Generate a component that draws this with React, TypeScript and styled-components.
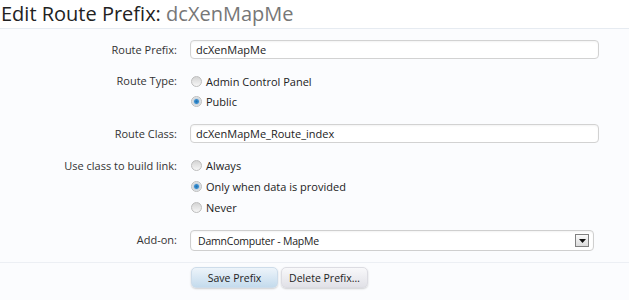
import React, { useState } from "react";
import styled, { createGlobalStyle } from "styled-components";

const GlobalStyle = createGlobalStyle`
  html, body {
    margin: 0;
    padding: 0;
    background: #fff;
  }
  body {
    font-family: "Open Sans", "DejaVu Sans", sans-serif;
    color: #222;
  }
`;

const routeTypes = ["Admin Control Panel", "Public"];
const buildOptions = ["Always", "Only when data is provided", "Never"];

const App = () => {
  const [prefix, setPrefix] = useState("dcXenMapMe");
  const [routeClass, setRouteClass] = useState("dcXenMapMe_Route_index");
  const [routeType, setRouteType] = useState("Public");
  const [buildLink, setBuildLink] = useState("Only when data is provided");

  return (
    <Page>
      <GlobalStyle />
      <TitleBar>
        Edit Route Prefix: <TitleName>dcXenMapMe</TitleName>
      </TitleBar>
      <Form onSubmit={(e) => e.preventDefault()}>
        <Row>
          <Label>Route Prefix:</Label>
          <TextInput value={prefix} onChange={(e) => setPrefix(e.target.value)} />
        </Row>
        <Row $gap={13}>
          <Label $line={20}>Route Type:</Label>
          <RadioList>
            {routeTypes.map((t) => (
              <RadioRow key={t} $height={20}>
                <Radio $checked={routeType === t} onClick={() => setRouteType(t)} />
                {t}
              </RadioRow>
            ))}
          </RadioList>
        </Row>
        <Row>
          <Label>Route Class:</Label>
          <TextInput value={routeClass} onChange={(e) => setRouteClass(e.target.value)} />
        </Row>
        <Row>
          <Label $line={21}>Use class to build link:</Label>
          <RadioList>
            {buildOptions.map((t) => (
              <RadioRow key={t} $height={21}>
                <Radio $checked={buildLink === t} onClick={() => setBuildLink(t)} />
                {t}
              </RadioRow>
            ))}
          </RadioList>
        </Row>
        <Row>
          <Label $line={20}>Add-on:</Label>
          <SelectBox>
            <span>DamnComputer - MapMe</span>
            <SelectArrow>
              <svg width="7" height="4" viewBox="0 0 7 4">
                <path d="M0 0h7L3.5 4z" fill="#111" />
              </svg>
            </SelectArrow>
          </SelectBox>
        </Row>
        <Buttons>
          <Button $primary type="submit">Save Prefix</Button>
          <Button type="button">Delete Prefix…</Button>
        </Buttons>
      </Form>
    </Page>
  );
};

export default App;

const Page = styled.div`
  width: 629px;
  height: 300px;
  overflow: hidden;
  background: #fff;
`;

const TitleBar = styled.h1`
  margin: 0;
  height: 28px;
  padding: 0 0 0 1px;
  font-size: 20px;
  font-weight: normal;
  line-height: 28px;
  color: #222;
  border-bottom: 1px solid #e6ebf1;
`;

const TitleName = styled.span`
  color: #777;
`;

const Form = styled.form`
  display: flex;
  flex-direction: column;
  padding-top: 11px;
  background: #fbfcfe;
  height: 100%;
`;

const Row = styled.div<{ $gap?: number }>`
  display: grid;
  grid-template-columns: 177px 409px;
  column-gap: 13px;
  align-items: start;
  margin-bottom: ${(p) => p.$gap ?? 12}px;
  font-size: 11px;
`;

const Label = styled.label<{ $line?: number }>`
  text-align: right;
  color: #333;
  line-height: ${(p) => p.$line ?? 19}px;
`;

const TextInput = styled.input`
  box-sizing: border-box;
  height: 19px;
  width: 409px;
  padding: 0 5px;
  font: 11px "Open Sans", "DejaVu Sans", sans-serif;
  color: #222;
  background: #fff;
  border: 1px solid #d2d2d2;
  border-radius: 4px;
  box-shadow: inset 0 1px 2px rgba(0, 0, 0, 0.05);
  outline: none;
`;

const RadioList = styled.div`
  display: flex;
  flex-direction: column;
`;

const RadioRow = styled.div<{ $height: number }>`
  display: flex;
  align-items: center;
  gap: 4px;
  height: ${(p) => p.$height}px;
  margin-left: 1px;
  color: #222;
  font-size: 11px;
`;

const Radio = styled.span<{ $checked?: boolean }>`
  box-sizing: border-box;
  width: 11px;
  height: 11px;
  border-radius: 50%;
  border: 1px solid #bdbdbd;
  background: ${(p) =>
    p.$checked
      ? "radial-gradient(circle, #1d6fb0 0, #3b8fd0 2px, #c9d3dc 3px, #eeeeee 5px)"
      : "linear-gradient(#d4d4d4, #f6f6f6)"};
  cursor: pointer;
`;

const SelectBox = styled.div`
  box-sizing: border-box;
  display: flex;
  align-items: center;
  justify-content: space-between;
  width: 404px;
  height: 21px;
  padding: 0 4px 0 7px;
  font-size: 10.5px;
  letter-spacing: -0.2px;
  color: #222;
  background: #fff;
  border: 1px solid #cfcfcf;
  border-radius: 4px;
  box-shadow: inset 0 1px 2px rgba(0, 0, 0, 0.05);
`;

const SelectArrow = styled.span`
  box-sizing: border-box;
  display: flex;
  align-items: center;
  justify-content: center;
  width: 14px;
  height: 13px;
  border: 1px solid #808080;
  background: linear-gradient(#fafafa, #dcdcdc);
`;

const Buttons = styled.div`
  display: flex;
  gap: 3px;
  margin-top: -1px;
  padding: 4px 0 0 191px;
  border-top: 1px solid #eceff4;
`;

const Button = styled.button<{ $primary?: boolean }>`
  width: 87px;
  height: 21px;
  padding: 0;
  font: 10.5px "Open Sans", "DejaVu Sans", sans-serif;
  color: #222;
  border: 1px solid ${(p) => (p.$primary ? "#cddcea" : "#dcdce2")};
  border-radius: 5px;
  background: ${(p) =>
    p.$primary
      ? "linear-gradient(#edf4fa, #c4dbed)"
      : "linear-gradient(#f8f8fa, #e1e1e7)"};
  box-shadow: 0 1px 2px rgba(0, 0, 0, 0.18);
  cursor: pointer;
`;
